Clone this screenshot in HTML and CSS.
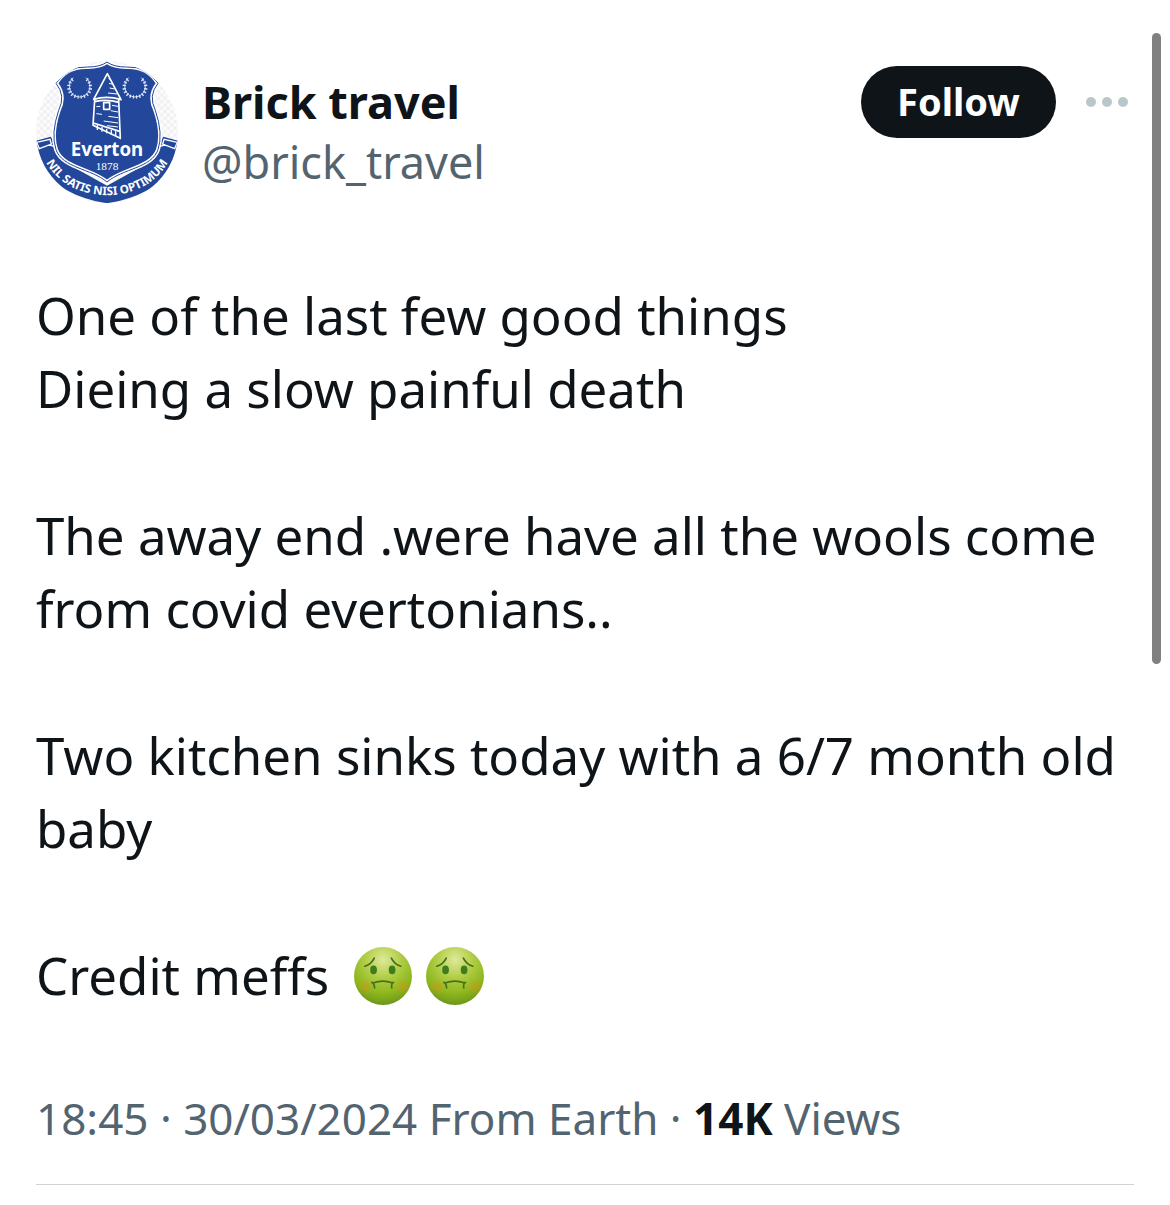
FILE: index.html
```html
<!DOCTYPE html>
<html lang="en">
<head>
<meta charset="utf-8">
<meta name="viewport" content="width=device-width, initial-scale=1">
<title>Brick travel</title>
<link rel="stylesheet" href="styles.css">
</head>
<body>
<svg width="0" height="0" class="defs" aria-hidden="true">
  <defs>
    <radialGradient id="face" cx="50%" cy="22%" r="78%">
      <stop offset="0" stop-color="#dfe99a"/>
      <stop offset=".4" stop-color="#b0cd45"/>
      <stop offset=".75" stop-color="#8db61c"/>
      <stop offset="1" stop-color="#6d961d"/>
    </radialGradient>
    <radialGradient id="blush">
      <stop offset="0" stop-color="#c8981c" stop-opacity=".75"/>
      <stop offset="1" stop-color="#c0a01c" stop-opacity="0"/>
    </radialGradient>
    <symbol id="nauseated" viewBox="0 0 172 172">
      <circle cx="86" cy="86" r="86" fill="url(#face)"/>
      <circle cx="34" cy="117" r="24" fill="url(#blush)"/>
      <circle cx="146" cy="117" r="24" fill="url(#blush)"/>
      <ellipse cx="58" cy="68" rx="10" ry="13" fill="#3f7d1c"/>
      <ellipse cx="113" cy="68" rx="10" ry="13" fill="#3f7d1c"/>
      <g fill="none" stroke="#47701a" stroke-width="5" stroke-linecap="round">
        <path d="M32 57Q52 51 60 33M111 33Q119 51 139 57"/>
        <path d="M53 105Q60 107 61 121M117 105Q110 107 112 121M58 106Q86 96 113 106"/>
      </g>
    </symbol>
  </defs>
</svg>
<article class="post">
  <header class="head">
    <a class="avatar" href="#" aria-label="Brick travel profile">
      <svg viewBox="18 33 426 426" width="142" height="142">
        <defs>
          <clipPath id="disc"><circle cx="231" cy="246" r="213"/></clipPath>
          <pattern id="check" width="20" height="20" patternUnits="userSpaceOnUse">
            <path d="M0 0h20v20H0z" fill="#fdfdfd"/><path d="M0 0h10v10H0zM10 10h10v10H10z" fill="#f0f0f2"/>
          </pattern>
          <path id="motto" d="M34 302C86 480 376 480 428 302"/>
          <g id="laurel-half" fill="none" stroke="#dfe7f7">
            <path d="M130 83C109 102 117 139 149 141" stroke-width="3"/>
            <path d="M128 88C107 105 116 140 146 141" stroke-width="10" stroke-dasharray="4 6"/>
          </g>
          <g id="laurel">
            <use href="#laurel-half"/>
            <use href="#laurel-half" transform="translate(298) scale(-1 1)"/>
          </g>
        </defs>
        <g clip-path="url(#disc)">
          <path d="M18 33h426v426H18z" fill="url(#check)"/>
          <path d="M18 272L62 260L78 286L98 333L231 407L365 333L385 286L400 260L444 272V350Q360 440 231 460Q102 440 18 350z" fill="#23479a"/>
          <path d="M20 277L60 268L64 282L28 296zM442 277L402 268L398 282L434 296zM74 290L62 286M388 290L400 286" fill="none" stroke="#fff" stroke-width="4"/>
          <path d="M78 100Q110 48 173 51Q211 51 231 36Q251 51 289 51Q352 48 384 100Q354 137 376 181Q400 251 384 299C365 354 278 356 231 396C184 356 97 354 78 299Q62 251 86 181Q108 137 78 100z" fill="#23479a" stroke="#fff" stroke-width="12"/>
          <path d="M78 100Q110 48 173 51Q211 51 231 36Q251 51 289 51Q352 48 384 100Q354 137 376 181Q400 251 384 299C365 354 278 356 231 396C184 356 97 354 78 299Q62 251 86 181Q108 137 78 100z" fill="none" stroke="#23479a" stroke-width="3"/>
        </g>
        <use href="#laurel"/>
        <use href="#laurel" x="166"/>
        <g fill="none" stroke="#fff" stroke-width="5" stroke-linejoin="round">
          <path d="M232 71L191 148Q231 136 273 149zM194 150L189 226L271 265L266 150M194 155Q230 146 267 157M190 219L269 244M221 158h18v20h-18z"/>
          <path d="M202 226v14M216 231v14M230 236v14M244 240v14M257 244v14" stroke-width="4"/>
          <path d="M236 86L243 89M237 100L248 103M239 114L254 117M234 129L261 132M246 166L264 169M242 182L264 186M235 199L264 203M221 213L264 219M231 227L264 231M199 170L211 169M199 191L216 193" stroke-width="3"/>
        </g>
        <text class="crest-name" x="231" y="317" text-anchor="middle">Everton</text>
        <text class="crest-year" x="231" y="361" text-anchor="middle">1878</text>
        <text class="crest-motto" text-anchor="middle"><textPath href="#motto" startOffset="50%">NIL SATIS NISI OPTIMUM</textPath></text>
      </svg>
    </a>
    <div class="who">
      <a class="name" href="#">Brick travel</a>
      <a class="handle" href="#">@brick_travel</a>
    </div>
    <div class="actions">
      <button class="follow" type="button">Follow</button>
      <button class="more" type="button" aria-label="More">
        <svg viewBox="0 0 42 10" width="42" height="10" fill="#b9c6cb"><circle cx="5" cy="5" r="5"/><circle cx="21" cy="5" r="5"/><circle cx="37" cy="5" r="5"/></svg>
      </button>
    </div>
  </header>
  <div class="body">
    <p>One of the last few good things<br>Dieing a slow painful death</p>
    <p>The away end .were have all the wools come<br>from covid evertonians..</p>
    <p>Two kitchen sinks today with a 6/7 month old<br>baby</p>
    <p class="emoji-line">Credit meffs <span class="emojis"><svg width="58" height="58" role="img" aria-label="nauseated face"><use href="#nauseated"/></svg><svg width="58" height="58" role="img" aria-label="nauseated face"><use href="#nauseated"/></svg></span></p>
  </div>
  <footer class="meta"><time datetime="2024-03-30T18:45">18:45 · 30/03/2024</time> From Earth · <strong>14K</strong> Views</footer>
</article>
<div class="scroll-thumb"></div>
</body>
</html>
```
FILE: styles.css
```css
* { box-sizing: border-box; }
body {
  margin: 0;
  background: #fff;
  color: #0f1419;
  font-family: "Noto Sans", "Open Sans", sans-serif;
}
a { color: inherit; text-decoration: none; }
button { font: inherit; border: 0; padding: 0; cursor: pointer; }
.defs { position: absolute; }
.post {
  margin: 0 36px;
  padding-top: 61px;
}
.head { display: flex; align-items: flex-start; }
.avatar { flex: none; height: 142px; margin-right: 24px; }
.avatar svg { display: block; }
.who {
  display: flex;
  flex-direction: column;
  flex: 1;
  padding-top: 11px;
  line-height: 60px;
}
.name { font-size: 45px; font-weight: 700; }
.handle { font-size: 45px; color: #536471; }
.actions { display: flex; align-items: center; gap: 30px; padding: 5px 6px 0 0; }
.follow {
  width: 195px;
  height: 72px;
  padding-bottom: 2px;
  border-radius: 36px;
  background: #0f1419;
  color: #fff;
  font-size: 38px;
  font-weight: 700;
}
.more { display: flex; background: none; }
.body {
  margin-top: 76px;
  font-size: 51px;
  line-height: 73px;
  white-space: nowrap;
}
.body p { margin: 0 0 74px; }
.body .emoji-line { display: flex; align-items: center; gap: 25px; margin: 0; }
.emojis { display: flex; gap: 14px; }
.meta {
  margin-top: 76px;
  padding-bottom: 36px;
  border-bottom: 1px solid #cfd3d6;
  color: #536471;
  font-size: 44px;
  line-height: 60px;
  white-space: nowrap;
}
.meta strong { color: #0f1419; }
.crest-name { font: 700 56px "Noto Sans", sans-serif; fill: #fff; }
.crest-year { font: 34px "Liberation Serif", serif; fill: #fff; }
.crest-motto { font: 700 35px "Noto Sans", sans-serif; fill: #fff; }
.scroll-thumb {
  position: absolute;
  top: 33px;
  right: 9px;
  width: 9px;
  height: 631px;
  border-radius: 5px;
  background: #808080;
}
```
